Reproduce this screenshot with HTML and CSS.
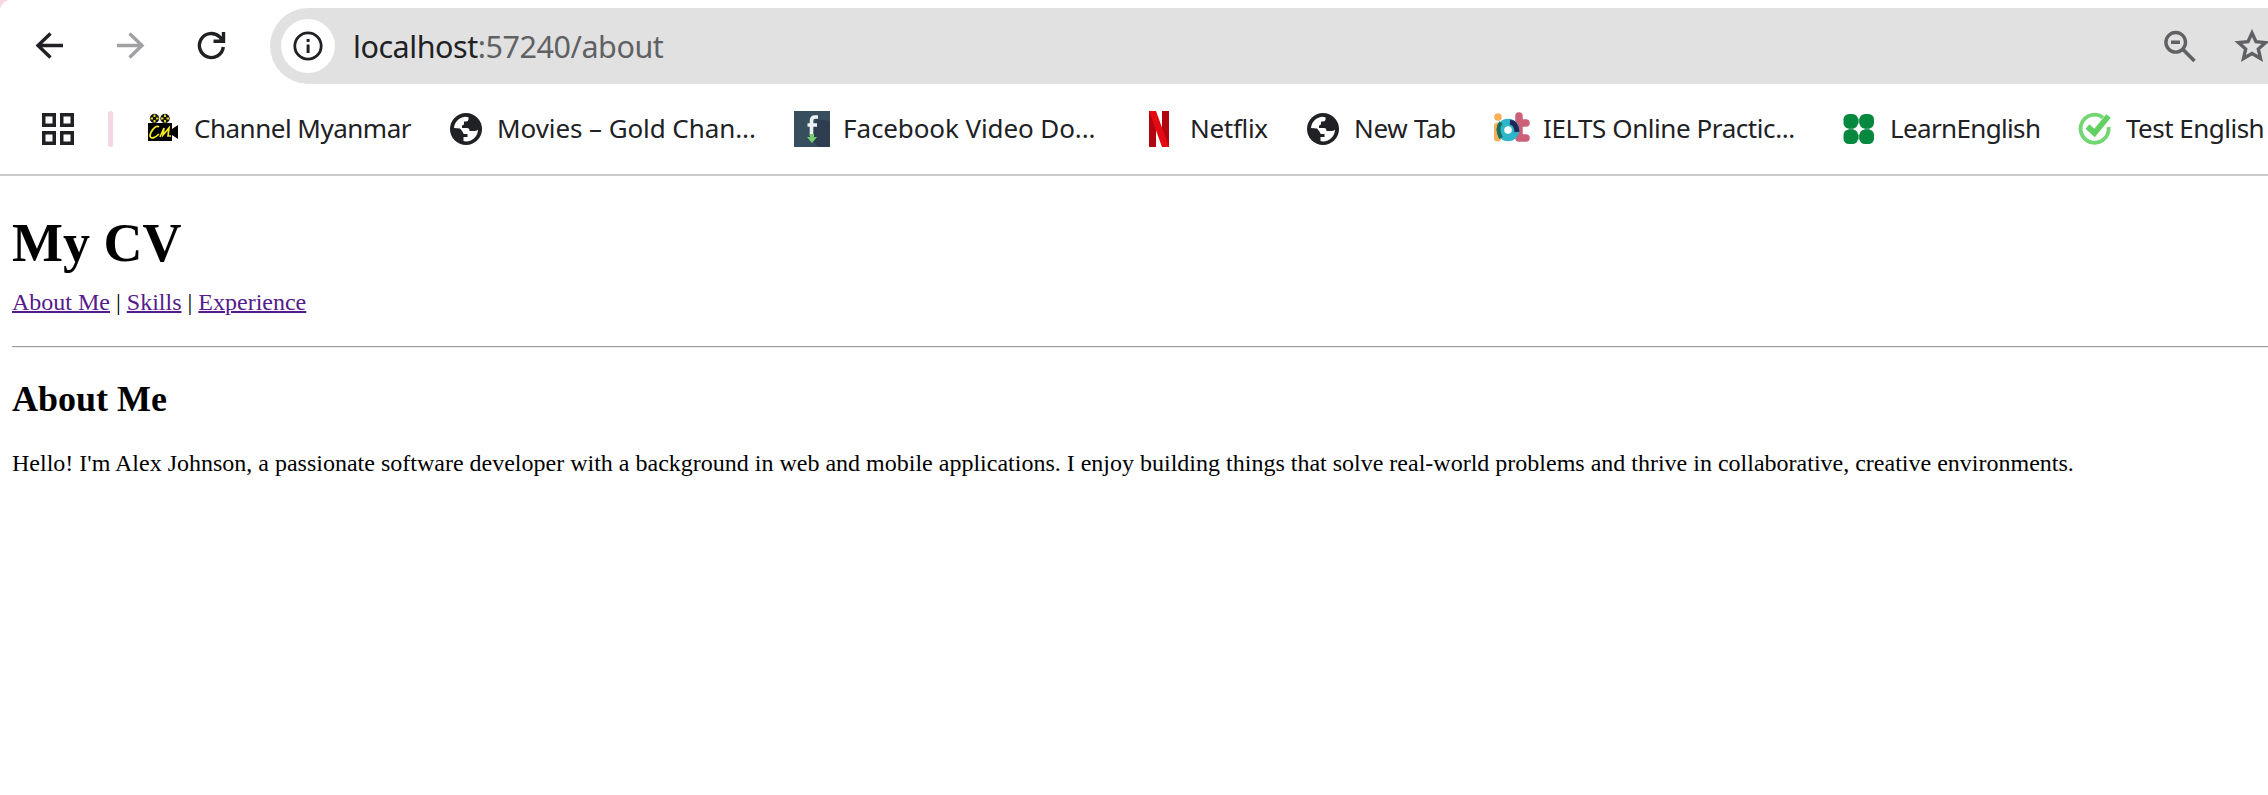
FILE: index.html
```html
<!DOCTYPE html>
<html lang="en">
<head>
<meta charset="utf-8">
<title>My CV</title>
<link rel="stylesheet" href="styles.css">
</head>
<body>
<svg class="defs" width="0" height="0" aria-hidden="true">
  <symbol id="globe" viewBox="0 0 32 32">
    <circle cx="16" cy="16" r="16" fill="#202124"/>
    <path d="M4 15C4.500 9 9 4.500 15 3.700L18.500 4.200V6.500Q18.500 8.500 16 8.500H14V10.500Q14 12.500 12 12.500V15H17Q19.500 15 19.500 18H24Q27 18 28 16.500C28 23 23 28.300 16 28.500L13.500 28V24H17.500V21H14.500Q13 21 12.500 18.500L10 15.500Z" fill="#fff"/>
  </symbol>
</svg>
<div class="chrome">
  <div class="toolbar">
    <svg class="tool" viewBox="33 29 34 34"><path d="M50.500 33.500 38 45.500 50.500 57.500M38 45.500H63" fill="none" stroke="#202124" stroke-width="3.400"/></svg>
    <svg class="tool" viewBox="113 29 34 34"><path d="M129.500 33.500 142 45.500 129.500 57.500M142 45.500H117" fill="none" stroke="#a0a1a4" stroke-width="3.400"/></svg>
    <svg class="tool" viewBox="193 29 34 34"><path d="M223.300 47A12 12 0 1 1 219.500 36.700L223 40.500M223.500 32V41.300H213.500" fill="none" stroke="#202124" stroke-width="3.400"/></svg>
    <div class="omnibox">
      <span class="site-info"><svg class="info" viewBox="0 0 30 30"><circle cx="15" cy="15" r="13.200" fill="none" stroke="#202124" stroke-width="2.800"/><path d="M13.600 13.500h3v8.500h-3zM13.600 8h3v3h-3z" fill="#202124"/></svg></span>
      <span class="url">localhost<span class="path">:57240/about</span></span>
      <svg class="zoom" viewBox="2164 29 34 34"><circle cx="2175.700" cy="42.300" r="9.800" fill="none" stroke="#5f6164" stroke-width="3.400"/><path d="M2182.500 49 2194.500 61M2171 42.300h9" fill="none" stroke="#5f6164" stroke-width="3.600"/></svg>
      <svg class="star" viewBox="2234 29 34 34"><path d="M2252 33 2256 41.700 2265.500 42.600 2258.300 49 2260.500 58.500 2252 53.500 2243.500 58.500 2245.700 49 2238.500 42.600 2248 41.700Z" fill="none" stroke="#5f6164" stroke-width="3.400"/></svg>
    </div>
  </div>
  <div class="bookmarks">
    <svg class="apps" viewBox="0 0 32 32"><path d="M1.750 1.750h10.500v10.500H1.750zM19.750 1.750h10.500v10.500h-10.500zM1.750 19.750h10.500v10.500H1.750zM19.750 19.750h10.500v10.500h-10.500z" fill="none" stroke="#202124" stroke-width="3.500"/></svg>
    <span class="divider"></span>
    <a class="bm bm-channel"><svg class="fav" viewBox="0 0 36 36"><circle cx="9.500" cy="7.500" r="4.700" fill="#111"/><circle cx="20" cy="7.500" r="4.700" fill="#111"/><path d="M9.500 3.500v8M5.500 7.500h8M20 3.500v8M16 7.500h8" stroke="#ddd51d" stroke-width="2" stroke-dasharray="2.500 3"/><path d="M3 12H27V18L33 14V28L27 24V30H3Z" fill="#000"/><path d="M14 16C11 13 5 21 5 25C6 29 11 26 14 23M15 26 19 17 18 24 24 17 23 25 26 25" fill="none" stroke="#f3eb1c" stroke-width="1.700"/></svg><span class="label">Channel Myanmar</span></a>
    <a class="bm bm-movies"><svg class="fav globe"><use href="#globe"/></svg><span class="label">Movies – Gold Chan...</span></a>
    <a class="bm bm-facebook"><svg class="fav" viewBox="0 0 36 36"><path d="M0 0H36V36H0Z" fill="#364e5d"/><path d="M22 8 36 10V36H24L17 28Z" fill="#2e3d50"/><path d="M24 6H21Q17.500 6 17.500 10V25M13.500 14H23" fill="none" stroke="#eef1f3" stroke-width="3.600"/><path d="M16 23h4v3h3l-5 6-5-6h3z" fill="#75cf70"/></svg><span class="label">Facebook Video Do...</span></a>
    <a class="bm bm-netflix"><svg class="fav" viewBox="0 0 36 36"><path d="M8 0h7v36l-7 0zM21 0h7v36h-7z" fill="#b1060f"/><path d="M8 0h7l13 36h-7z" fill="#e50914"/></svg><span class="label">Netflix</span></a>
    <a class="bm bm-newtab"><svg class="fav globe"><use href="#globe"/></svg><span class="label">New Tab</span></a>
    <a class="bm bm-ielts"><svg class="fav" viewBox="0 0 36 36"><circle cx="4" cy="6" r="3.800" fill="#f9ae58"/><path d="M3.500 15V27" stroke="#f9ae58" stroke-width="7" stroke-linecap="round"/><path d="M25 5V27M25 12H32M25 27H32" stroke="#cc6079" stroke-width="7.500" stroke-linecap="round" fill="none"/><circle cx="14" cy="19" r="7.500" fill="none" stroke="#2fb5cb" stroke-width="7.500"/><path d="M7 11.500Q2 18 7 27" fill="none" stroke="#17705e" stroke-width="4"/><path d="M16 11Q22.500 12 23 21" fill="none" stroke="#1c2857" stroke-width="5"/></svg><span class="label">IELTS Online Practic...</span></a>
    <a class="bm bm-learn"><svg class="fav" viewBox="0 0 36 36"><path d="M10 10H26V26H10Z" fill="none" stroke="#5cb384" stroke-width="5"/><g fill="#07883f"><rect x="2.500" y="3" width="14.500" height="14.500" rx="5.500"/><rect x="18.500" y="3" width="14.500" height="14.500" rx="5.500"/><rect x="2.500" y="18.500" width="14.500" height="14.500" rx="5.500"/><rect x="18.500" y="18.500" width="14.500" height="14.500" rx="5.500"/></g></svg><span class="label">LearnEnglish</span></a>
    <a class="bm bm-test"><svg class="fav" viewBox="0 0 36 36"><path d="M26 6.500A14 14 0 1 0 31.500 16" fill="none" stroke="#72d673" stroke-width="3.800"/><path d="M10.500 15.500 17.500 22 31.500 5" fill="none" stroke="#62d062" stroke-width="5.800"/></svg><span class="label">Test English</span></a>
  </div>
</div>
<main class="page">
  <h1 class="title">My CV</h1>
  <nav class="nav"><a class="link" href="#about">About Me</a> | <a class="link" href="#skills">Skills</a> | <a class="link" href="#experience">Experience</a></nav>
  <hr class="rule">
  <h2 class="heading">About Me</h2>
  <p class="text">Hello! I'm Alex Johnson, a passionate software developer with a background in web and mobile applications. I enjoy building things that solve real-world problems and thrive in collaborative, creative environments.</p>
</main>
</body>
</html>
```
FILE: styles.css
```css
* { box-sizing: border-box; }
body { margin: 0; background: #fff; overflow: hidden; }
svg { display: block; flex: none; }
.defs { display: none; }

.chrome {
  height: 176px;
  border-bottom: 2px solid #ccc;
  background: radial-gradient(circle at 12px 12px, #fff 12px, #f8d5e2 12.8px) 0 0 / 12px 12px no-repeat;
  font-family: "Noto Sans", "Open Sans", sans-serif;
  color: #202124;
}
.toolbar { display: flex; align-items: center; gap: 46px; height: 92px; padding-left: 33px; }
.tool { width: 34px; height: 34px; }
.omnibox {
  flex: 1;
  display: flex;
  align-items: center;
  height: 76px;
  margin-left: -3px;
  padding-left: 11px;
  border-radius: 38px 0 0 38px;
  background: #e1e1e1;
}
.site-info { display: flex; align-items: center; justify-content: center; width: 54px; height: 54px; border-radius: 50%; background: #fff; }
.info { width: 30px; height: 30px; }
.url { flex: 1; margin-left: 18px; font-size: 30.500px; line-height: 44px; letter-spacing: -0.450px; white-space: nowrap; }
.path { color: #5f6164; }
.zoom { width: 34px; height: 34px; margin-right: 36px; }
.star { width: 34px; height: 34px; }

.bookmarks { display: flex; align-items: center; height: 74px; padding-left: 42px; white-space: nowrap; }
.apps { width: 32px; height: 32px; }
.divider { flex: none; width: 5px; height: 36px; margin: 0 32px 0 34px; border-radius: 3px; background: #f8d5e2; }
.bm { flex: none; display: flex; align-items: center; gap: 13px; letter-spacing: -0.300px; }
.fav { width: 36px; height: 36px; }
.globe { padding: 2px; }
.label { padding-bottom: 2px; font-size: 26px; line-height: 34px; }
.bm-channel { width: 303px; letter-spacing: -0.500px; }
.bm-movies { width: 346px; letter-spacing: -0.080px; }
.bm-facebook { width: 347px; letter-spacing: -0.100px; }
.bm-netflix { width: 164px; }
.bm-newtab { width: 189px; }
.bm-ielts { width: 347px; letter-spacing: -0.430px; }
.bm-learn { width: 236px; letter-spacing: -0.650px; }
.bm-test { width: 191px; letter-spacing: -0.520px; }

.page { padding: 36px 0 0 12px; font-family: "Liberation Serif", "Times New Roman", serif; font-size: 24px; line-height: 28px; color: #000; }
.title { margin: 0 0 14px; font-size: 54px; line-height: 62px; }
.link { color: #551a8b; text-decoration-thickness: 2px; }
.rule { height: 2px; margin: 30px 0 31px; border: 0; border-top: 1px solid #9a9a9a; background: #eee; }
.heading { margin: 0 0 29px; font-size: 36px; line-height: 41px; }
.text { margin: 0; white-space: nowrap; }
```
